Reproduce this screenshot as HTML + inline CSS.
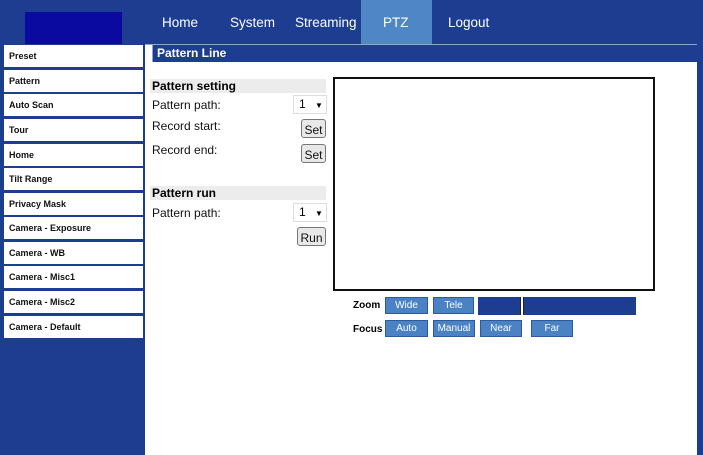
<!DOCTYPE html>
<html><head><style>
*{margin:0;padding:0;box-sizing:border-box}
body{width:703px;height:455px;background:#1d3d90;position:relative;overflow:hidden;font-family:"Liberation Sans",sans-serif}
.a{position:absolute}
.nav{color:#fff;font-size:13.5px;top:15px}
.side{left:4px;width:139px;height:22px;background:#fff;font-size:9px;font-weight:bold;color:#111;padding:6px 0 0 5px}
.lbl{font-size:12px;color:#111}
.sel{background:#fff;border:1px solid #ddd;font-size:12px;width:34px;height:19px;padding:1px 0 0 5px}
.btn{background:#e8e8e8;border:1px solid #777;border-radius:3px;font-size:12px;text-align:center;padding-top:3px;color:#111}
.bb{background:#4a82c4;border:1px solid #2d5a9a;color:#fff;font-size:10px;text-align:center;padding-top:2px;height:17px}
</style></head><body>
<div class="a" style="left:0;top:0;width:703px;height:44px;background:#1d3d90"></div>
<div class="a" style="left:25px;top:12px;width:97px;height:32px;background:#0a0aa0"></div>
<div class="a" style="left:361px;top:0;width:71px;height:44px;background:#4f87c6"></div>
<div class="a nav" style="left:162px">Home</div>
<div class="a nav" style="left:230px">System</div>
<div class="a nav" style="left:295px">Streaming</div>
<div class="a nav" style="left:383px">PTZ</div>
<div class="a nav" style="left:448px">Logout</div>
<div class="a" style="left:145px;top:44px;width:552px;height:411px;background:#fff;border-top:1px solid #8fa5cf"></div>
<div class="a" style="left:152px;top:45px;width:547px;height:17px;background:#1d3d90;color:#fff;font-size:12px;font-weight:bold;padding:1px 0 0 4px;border-left:1px solid #8fa5cf">Pattern Line</div>

<div class="a side" style="top:45px">Preset</div>
<div class="a side" style="top:70px">Pattern</div>
<div class="a side" style="top:94px">Auto Scan</div>
<div class="a side" style="top:119px">Tour</div>
<div class="a side" style="top:144px">Home</div>
<div class="a side" style="top:168px">Tilt Range</div>
<div class="a side" style="top:193px">Privacy Mask</div>
<div class="a side" style="top:217px">Camera - Exposure</div>
<div class="a side" style="top:242px">Camera - WB</div>
<div class="a side" style="top:266px">Camera - Misc1</div>
<div class="a side" style="top:291px">Camera - Misc2</div>
<div class="a side" style="top:316px">Camera - Default</div>

<div class="a" style="left:150px;top:79px;width:176px;height:14px;background:#ececec;font-size:12px;font-weight:bold;padding-left:2px">Pattern setting</div>
<div class="a lbl" style="left:152px;top:98px">Pattern path:</div>
<div class="a sel" style="left:293px;top:95px">1 <span style="font-size:8px;margin-left:6px">▼</span></div>
<div class="a lbl" style="left:152px;top:119px">Record start:</div>
<div class="a btn" style="left:301px;top:119px;width:25px;height:19px">Set</div>
<div class="a lbl" style="left:152px;top:143px">Record end:</div>
<div class="a btn" style="left:301px;top:144px;width:25px;height:19px">Set</div>
<div class="a" style="left:150px;top:186px;width:176px;height:14px;background:#ececec;font-size:12px;font-weight:bold;padding-left:2px">Pattern run</div>
<div class="a lbl" style="left:152px;top:206px">Pattern path:</div>
<div class="a sel" style="left:293px;top:203px">1 <span style="font-size:8px;margin-left:6px">▼</span></div>
<div class="a btn" style="left:297px;top:227px;width:29px;height:19px">Run</div>

<div class="a" style="left:333px;top:77px;width:322px;height:214px;border:2px solid #111"></div>
<div class="a" style="left:353px;top:300px;font-size:10px;font-weight:bold">Zoom</div>
<div class="a bb" style="left:385px;top:297px;width:43px">Wide</div>
<div class="a bb" style="left:433px;top:297px;width:41px">Tele</div>
<div class="a" style="left:478px;top:297px;width:158px;height:18px;background:#1d3d90"></div>
<div class="a" style="left:520px;top:297px;width:4px;height:18px;background:#fff;border-left:1px solid #222;border-right:1px solid #222"></div>
<div class="a" style="left:353px;top:324px;font-size:10px;font-weight:bold">Focus</div>
<div class="a bb" style="left:385px;top:320px;width:43px">Auto</div>
<div class="a bb" style="left:433px;top:320px;width:42px">Manual</div>
<div class="a bb" style="left:480px;top:320px;width:42px">Near</div>
<div class="a bb" style="left:531px;top:320px;width:42px">Far</div>
</body></html>
